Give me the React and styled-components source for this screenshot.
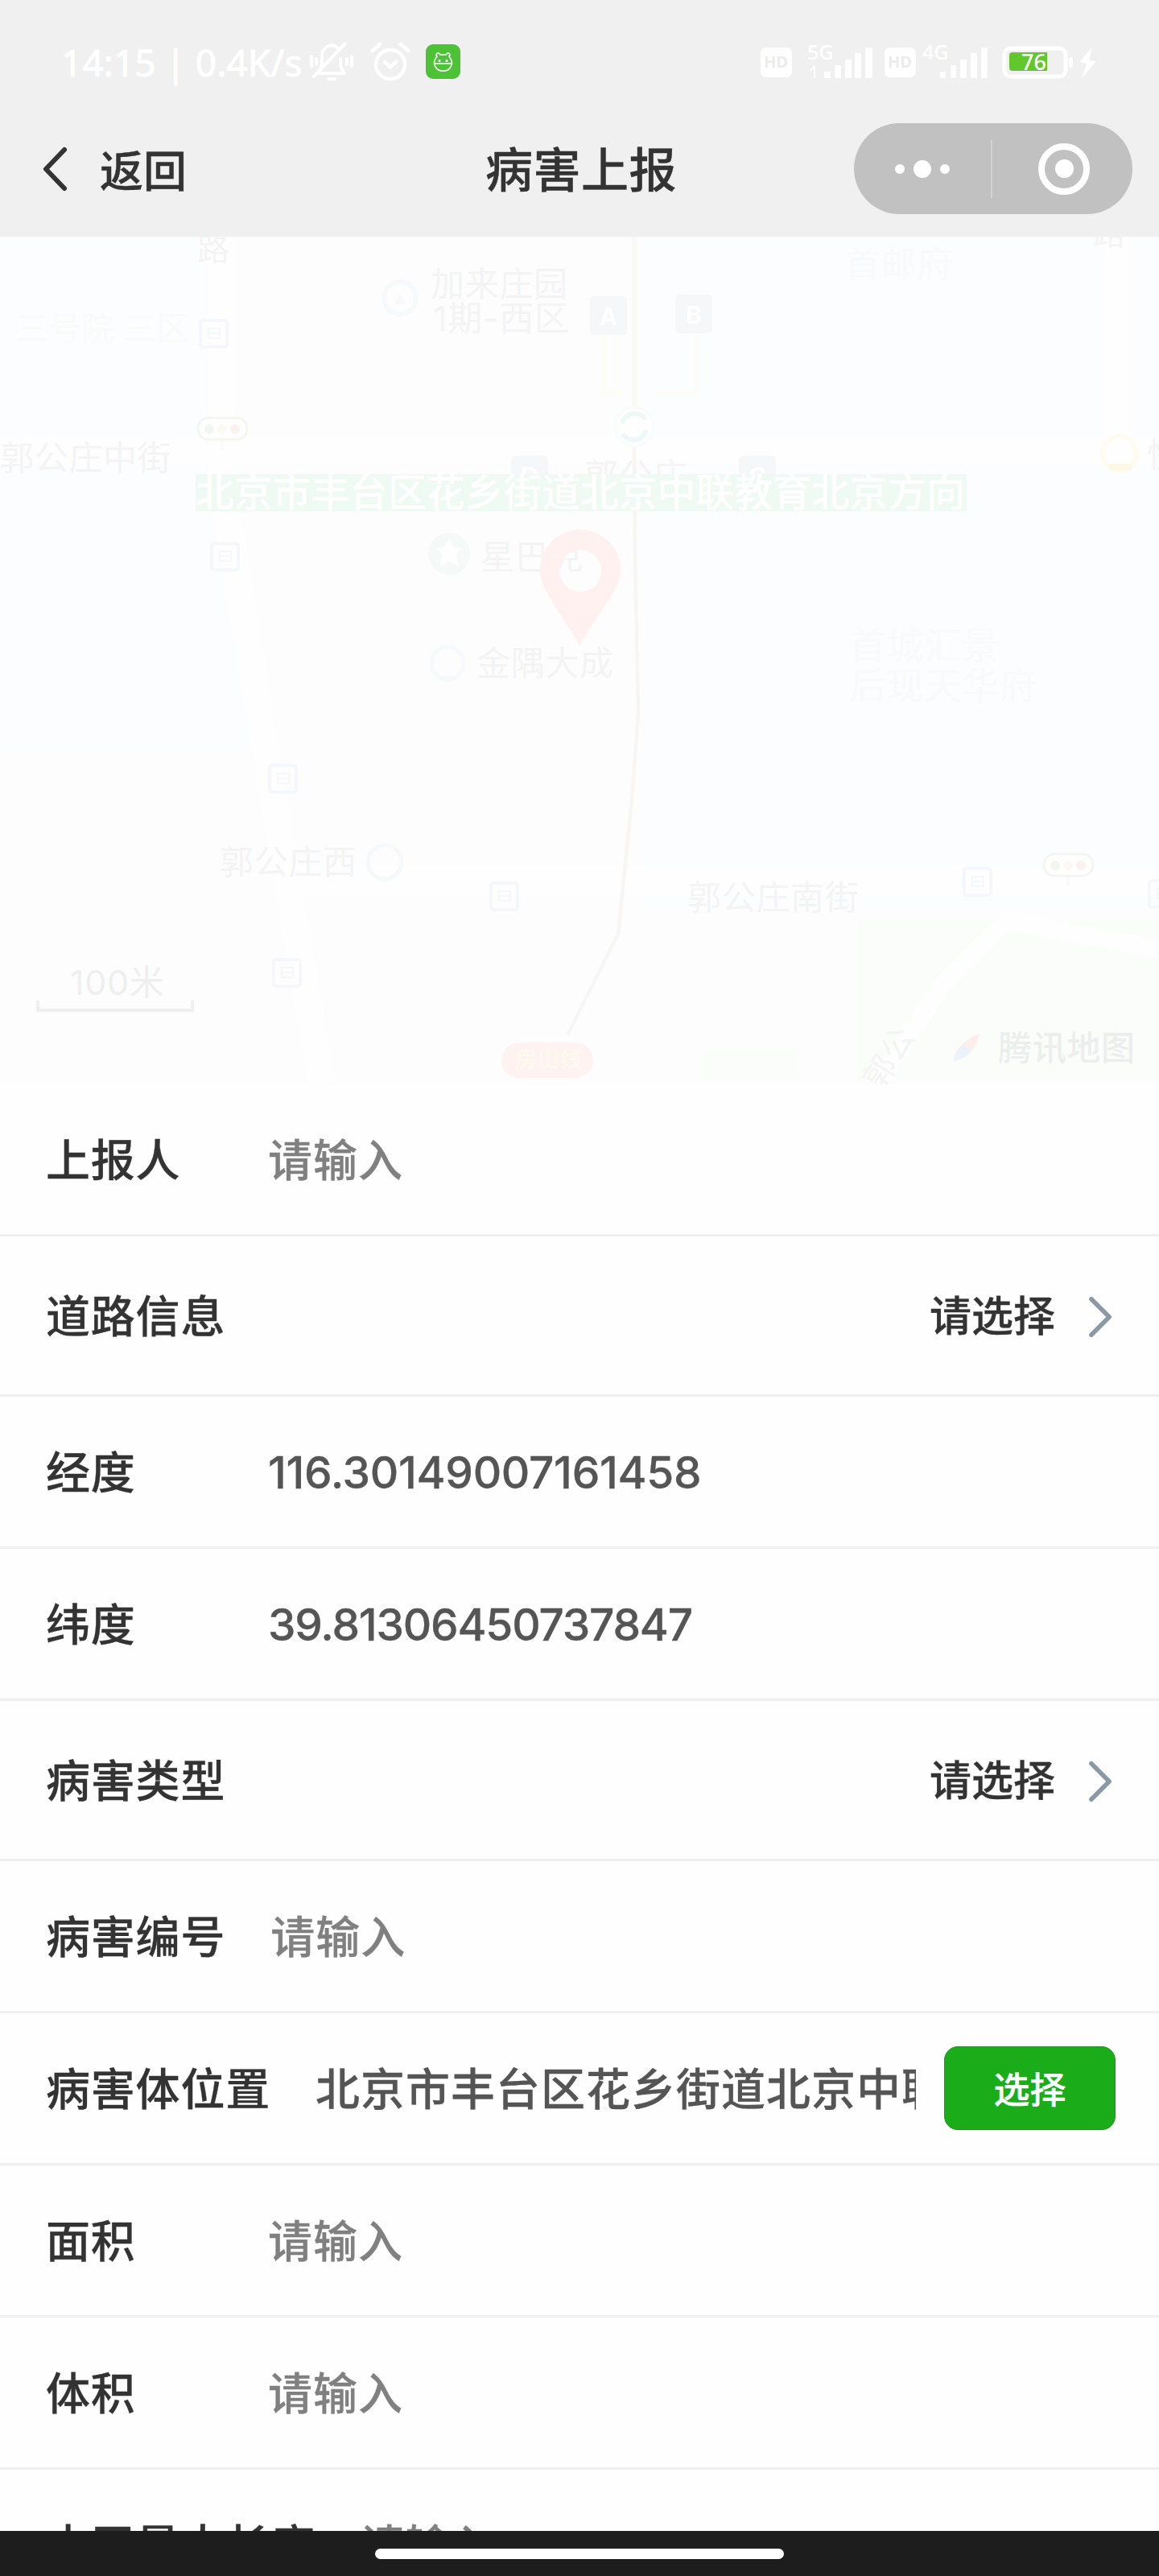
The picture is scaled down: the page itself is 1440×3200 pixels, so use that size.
import React from 'react'
import styled, { createGlobalStyle, css } from 'styled-components'

const GlobalStyle = createGlobalStyle`
  * {
    box-sizing: border-box;
  }
  body {
    margin: 0;
    background-color: #fefefe;
    font-family: Inter, 'Noto Sans CJK SC', sans-serif;
  }
  button {
    font-family: inherit;
  }
`

const Page = styled.div`
  width: 1440px;
  height: 3200px;
  display: flex;
  flex-direction: column;
  overflow: hidden;
  background-color: #fefefe;
`

const Header = styled.header`
  flex: none;
  height: 294px;
  background-color: #f0f0f0;
`
const StatusBar = styled.div`
  height: 153px;
  padding: 0 73px 0 76px;
  display: flex;
  justify-content: space-between;
  align-items: center;
  color: #fefefe;
`
const StatusGroup = styled.div`
  display: flex;
  align-items: center;
`
const StatusIcons = styled.div`
  display: flex;
  align-items: center;
  gap: 19px;
`
const StatusText = styled.span`
  width: 307px;
  font-family: 'Noto Sans', sans-serif;
  font-size: 46px;
  line-height: 60px;
  -webkit-text-stroke: 1px #fefefe;
  white-space: nowrap;
`
const NavBar = styled.div`
  height: 113px;
  padding: 0 33px 0 52px;
  display: grid;
  grid-template-columns: 1fr auto 1fr;
  align-items: center;
`
const BackButton = styled.div`
  display: flex;
  align-items: center;
  gap: 39px;
  font-size: 54px;
  font-weight: 500;
  color: #333333;
  -webkit-text-stroke: 0.4px #333333;
`
const Title = styled.h1`
  margin: 0;
  padding: 4px 15px 0 0;
  font-size: 59px;
  line-height: 80px;
  letter-spacing: 0.5px;
  font-weight: 500;
  color: #333333;
  -webkit-text-stroke: 0.4px #333333;
`
const Capsule = styled.div`
  justify-self: end;
  width: 346px;
  height: 113px;
  border-radius: 57px;
  background-color: #c1c1c1;
  display: flex;
  align-items: center;
`
const CapsuleHalf = styled.div`
  flex: 1;
  display: flex;
  justify-content: center;
  align-items: center;
  gap: 11px;
  & + & {
    padding-left: 4px;
    border-left: 2px solid #d3d3d3;
    height: 72px;
  }
`
const Dot = styled.i`
  width: ${({ $size }) => $size}px;
  height: ${({ $size }) => $size}px;
  border-radius: 50%;
  background-color: #ffffff;
`
const Ring = styled.div`
  width: 64px;
  height: 64px;
  border: 8px solid #ffffff;
  border-radius: 50%;
  display: flex;
  justify-content: center;
  align-items: center;
`

const MapArea = styled.section`
  flex: none;
  position: relative;
  height: 1053px;
  overflow: hidden;
  background-color: #fcfdfe;
  & > svg {
    display: block;
  }
`
const MapLabel = styled.span`
  position: absolute;
  left: ${({ $x }) => $x}px;
  top: ${({ $y }) => $y}px;
  font-size: ${({ $size }) => $size || 42}px;
  font-weight: ${({ $weight }) => $weight || 400};
  line-height: 1;
  letter-spacing: 0.7px;
  white-space: nowrap;
  color: ${({ $color }) => $color || '#f4f4f5'};
  ${({ $rotate }) => $rotate && css`
    transform: rotate(${$rotate}deg);
  `}
`
const ExitBadge = styled.div`
  position: absolute;
  left: ${({ $x }) => $x}px;
  top: ${({ $y }) => $y}px;
  width: 46px;
  height: 48px;
  line-height: 50px;
  border-radius: 5px;
  background-color: #f6f7f9;
  color: #ffffff;
  font-size: 30px;
  font-weight: 700;
  text-align: center;
`
const Banner = styled.div`
  position: absolute;
  left: 243px;
  top: 295px;
  width: 958px;
  height: 46px;
  line-height: 46px;
  font-size: 47.8px;
  font-weight: 500;
  white-space: nowrap;
  color: #ffffff;
  background-color: #effaf4;
`
const Pin = styled.svg`
  position: absolute;
  left: 671px;
  top: 364px;
`

const Form = styled.main`
  flex: 1;
  min-height: 0;
  overflow: hidden;
`
const Row = styled.div`
  height: ${({ $tall }) => ($tall ? 199 : 189)}px;
  padding: 2px 54px 0 57px;
  border-bottom: 3px solid #efefef;
  display: flex;
  align-items: center;
  font-size: 55px;
  line-height: 80px;
`
const Label = styled.label`
  flex: none;
  min-width: 276px;
  padding-right: 56px;
  letter-spacing: 0.8px;
  font-weight: 500;
  color: #333333;
  -webkit-text-stroke: 0.3px #333333;
`
const Value = styled.div`
  flex: 1;
  min-width: 0;
  overflow: hidden;
  white-space: nowrap;
  font-weight: 500;
  letter-spacing: ${({ $spacing }) => $spacing ?? 1}px;
  color: ${({ $placeholder }) => ($placeholder ? '#808080' : '#555555')};
  -webkit-text-stroke: 0.3px currentColor;
`
const Picker = styled.div`
  margin: 2px 2px 0 auto;
  display: flex;
  align-items: center;
  gap: 40px;
  font-size: 52px;
  font-weight: 500;
  color: #333333;
  -webkit-text-stroke: 0.3px #333333;
`
const SelectButton = styled.button`
  flex: none;
  width: 213px;
  height: 104px;
  margin: 0 0 2px 35px;
  padding: 0 0 2px;
  border: 1px solid #2a8f2a;
  border-radius: 17px;
  background-color: #1aad19;
  color: #ffffff;
  font-size: 45px;
  font-weight: 500;
  -webkit-text-stroke: 0.3px #ffffff;
`

const HomeBar = styled.footer`
  flex: none;
  height: 56px;
  padding-top: 22px;
  background-color: #1d1d1d;
`
const HomeIndicator = styled.div`
  width: 508px;
  height: 13px;
  margin: 0 auto;
  border-radius: 7px;
  background-color: #ffffff;
`

const rows = [
  { label: '上报人', placeholder: '请输入' },
  { label: '道路信息', picker: '请选择' },
  { label: '经度', value: '116.30149007161458', spacing: -0.3 },
  { label: '纬度', value: '39.81306450737847', spacing: -1.2 },
  { label: '病害类型', picker: '请选择' },
  { label: '病害编号', placeholder: '请输入' },
  { label: '病害体位置', value: '北京市丰台区花乡街道北京中联教育', button: '选择' },
  { label: '面积', placeholder: '请输入' },
  { label: '体积', placeholder: '请输入' },
  { label: '水平最大长度', placeholder: '请输入' },
]

const mapLabels = [
  { text: '路', x: 245, y: -4, size: 40 },
  { text: '三号院 三区', x: 20, y: 94, size: 40, color: '#f9fbfb' },
  { text: '加来庄园', x: 535, y: 38 },
  { text: '1期-西区', x: 538, y: 80, size: 43 },
  { text: '郭公庄中街', x: 0, y: 254 },
  { text: '首邮府', x: 1050, y: 12, color: '#f8fafb', size: 44 },
  { text: '路', x: 1358, y: -24, size: 40 },
  { text: '郭公庄', x: 726, y: 276 },
  { text: '星巴克', x: 597, y: 377 },
  { text: '金隅大成', x: 592, y: 509 },
  { text: '首城汇景', x: 1055, y: 484, size: 46, color: '#f9fafc' },
  { text: '后现天华府', x: 1055, y: 534, size: 46, color: '#f9fafc' },
  { text: '郭公庄西', x: 273, y: 756 },
  { text: '郭公庄南街', x: 854, y: 800 },
  { text: '快', x: 1425, y: 250 },
  { text: '100米', x: 87, y: 905, size: 43, color: '#efefef' },
  { text: '郭公', x: 1064, y: 1000, size: 40, rotate: -58 },
  { text: '腾讯地图', x: 1240, y: 987, size: 42, weight: 500, color: '#eceeed' },
]

const busStops = [[247, 102], [261, 379], [333, 655], [608, 801], [338, 896], [1196, 783], [1426, 798]]

const exits = [
  { name: 'A', x: 733, y: 74 },
  { name: 'B', x: 839, y: 72 },
  { name: 'D', x: 635, y: 272 },
  { name: 'C', x: 918, y: 272 },
]

const BellOffIcon = () => (
  <svg width="58" height="58" viewBox="0 0 58 58" fill="none" stroke="#fff" strokeWidth="4" strokeLinecap="round">
    <path d="M14 43h31M43 40c-3-4-3-8-3-15M36 11c-7-6-19-1-19 11 0 9 0 14-4 19M25 50h8M46 6 7 47M4 22v12M54 22v12M10 25v7M48 25v7" />
  </svg>
)

const AlarmIcon = () => (
  <svg width="50" height="52" viewBox="0 0 50 52" fill="none" stroke="#fff" strokeWidth="4.5" strokeLinecap="round">
    <circle cx="25" cy="29" r="18" />
    <path d="m18 26 7 6 7-6M3 12l9-8M47 12l-9-8" />
  </svg>
)

const AppBadge = () => (
  <svg width="43" height="43" viewBox="0 0 43 43">
    <rect width="43" height="43" rx="9" fill="#4dc236" />
    <g fill="none" stroke="#fff" strokeWidth="1.6">
      <path d="M14 15c-4 5-4 10-2 13 4 7 15 7 19 0 2-3 2-8-2-13 2-2 0-5-2-4l-2 2h-7l-2-2c-2-1-4 2-2 4zM11 24h21" />
      <path d="M17 19v3M26 19v3" strokeWidth="2.6" />
    </g>
  </svg>
)

const SignalIcons = () => (
  <svg width="422" height="60" viewBox="0 0 422 60" fill="#fff" fontFamily="Noto Sans, sans-serif">
    <rect x="0" y="12" width="39" height="37" rx="7" />
    <text x="4" y="37" fontSize="20" fontWeight="700" fill="#ececec">HD</text>
    <text x="58" y="27" fontSize="25" fontWeight="500">5G</text>
    <path d="M67 36v14M62 40l5-5" stroke="#fff" strokeWidth="2" />
    <path d="M79 42h8v8h-8zM92 34h8v16h-8zM105 27h8v23h-8zM117 19h8v31h-8zM130 12h9v38h-9z" />
    <rect x="154" y="12" width="39" height="37" rx="7" />
    <text x="158" y="37" fontSize="20" fontWeight="700" fill="#ececec">HD</text>
    <text x="201" y="27" fontSize="25" fontWeight="500">4G</text>
    <path d="M223 42h7v8h-7zM236 34h7v16h-7zM248 27h8v23h-8zM261 19h8v31h-8zM274 12h8v38h-8z" />
    <rect x="303" y="13" width="76" height="35" rx="8" fill="none" stroke="#fff" strokeWidth="5" />
    <path d="M313 18h43v23h-43a4 4 0 0 1-4-4V22a4 4 0 0 1 4-4z" fill="#60c82c" />
    <text x="324" y="40" fontSize="27" fontWeight="500">76</text>
    <rect x="383" y="24" width="5" height="13" rx="2" />
    <path d="m412 12-16 18 9 2-6 18 18-21-9-1z" />
  </svg>
)

const Arrow = ({ back }) => (
  <svg width="33" height={back ? 56 : 50} viewBox="0 0 33 54" fill="none" strokeLinecap="round" strokeLinejoin="round">
    {back ? (
      <path d="M28 3 5 27l23 24" stroke="#333333" strokeWidth="6" />
    ) : (
      <path d="m4 3 24 24L4 51" stroke="#8a99a3" strokeWidth="6" />
    )}
  </svg>
)

const TrafficLight = ({ x, y }) => (
  <g transform={`translate(${x} ${y})`}>
    <rect x="1" y="1" width="61" height="27" rx="13" fill="#fefefe" stroke="#f5f5f3" strokeWidth="3" />
    <circle cx="15" cy="15" r="6" fill="#f1f6f1" />
    <circle cx="31" cy="15" r="6" fill="#fbf9f2" />
    <circle cx="47" cy="15" r="6" fill="#fbf2f0" />
    <path d="M31 29v12" stroke="#f9f9f7" strokeWidth="3" />
  </g>
)

const MapDrawing = () => (
  <svg width="1440" height="1053" viewBox="0 0 1440 1053" fill="none">
    <path d="M275 0V300L330 640 400 1053H800V0z" fill="#fdfdfd" />
    <path d="M0 640h330l70 413H0zM800 830h640v223H800z" fill="#fdfdfd" />
    <path d="M1065 850H1440V1049H1065zM873 1009h119v40H873z" fill="#fbfdfb" />
    <path d="M0 265H1440M340 800H1440M275 0V300L330 640 400 1053M1388 0V265" stroke="#fefefe" strokeWidth="34" />
    <path d="M1440 885 1250 850 1170 930 1090 1053" stroke="#fefefe" strokeWidth="22" />
    <path d="M750 123v72h22M865 123v72h-48" stroke="#fcfdf6" strokeWidth="6" />
    <path d="M788 0v215" stroke="#fafaf4" strokeWidth="5" />
    <path d="M788 255 789 400 793 590 785 700 768 866 705 992" stroke="#f7f6f5" strokeWidth="4.5" />
    <circle cx="788" cy="236" r="24" fill="#fefefe" stroke="#f8fcfb" strokeWidth="3" />
    <path d="M773 232a16 16 0 0 1 29-5" stroke="#edf9f4" strokeWidth="6" />
    <path d="M803 240a16 16 0 0 1-29 5" stroke="#eef7fa" strokeWidth="6" />
    {busStops.map(([x, y]) => (
      <g key={`${x}-${y}`} stroke="#f5f7fd" strokeWidth="4">
        <rect x={x + 2} y={y + 2} width="33" height="33" rx="3" />
        <path d={`M${x + 12} ${y + 12}h14v12h-14zM${x + 12} ${y + 18}h14`} strokeWidth="2" />
      </g>
    ))}
    <TrafficLight x={245} y={224} />
    <TrafficLight x={1296} y={766} />
    <circle cx="497" cy="76" r="20" stroke="#f8f9fb" strokeWidth="6" />
    <path d="m489 84 8-12 8 12z" fill="#f8f9fb" />
    <circle cx="558" cy="394" r="26" fill="#f5f9f7" />
    <path d="m558 376 6 10 10 1-7 8 3 15-12-7-12 7 3-15-7-8 10-1z" fill="#fefefe" />
    <circle cx="556" cy="530" r="20" stroke="#f8f9fc" strokeWidth="5" />
    <path d="M545 548h22" stroke="#f6f8fb" strokeWidth="5" />
    <circle cx="478" cy="777" r="21" stroke="#f6f9fb" strokeWidth="5" />
    <circle cx="1391" cy="269" r="21" stroke="#fefbef" strokeWidth="6" />
    <path d="M1378 286h28" stroke="#fef7e6" strokeWidth="8" />
    <path d="M47 949v12h192v-12" stroke="#efefef" strokeWidth="4" />
    <rect x="623" y="1001" width="114" height="44" rx="22" fill="#fff3f1" />
    <path d="M1185 1022c2-14 16-26 32-32-1 7-5 16-10 22z" fill="#fdeeec" />
    <path d="M1185 1024c1-8 7-16 13-21l8 9c-5 7-12 10-21 12z" fill="#eaf2fc" />
  </svg>
)

const MapView = () => (
  <MapArea>
    <MapDrawing />
    {mapLabels.map(({ text, x, y, size, weight, color, rotate }) => (
      <MapLabel
        key={`${text}-${x}`}
        $x={x}
        $y={y}
        $size={size}
        $weight={weight}
        $color={color}
        $rotate={rotate}
      >
        {text}
      </MapLabel>
    ))}
    <MapLabel $x={640} $y={1009} $size={27} $color="#fefaf0">房山线</MapLabel>
    {exits.map(({ name, x, y }) => (
      <ExitBadge key={name} $x={x} $y={y}>{name}</ExitBadge>
    ))}
    <Banner>北京市丰台区花乡街道北京中联教育北京方向</Banner>
    <Pin width="100" height="144" viewBox="0 0 100 144">
      <path d="M50 0a50 50 0 0 0-50 50c0 24 20 44 49 94 29-50 51-70 51-94A50 50 0 0 0 50 0zm0 25a26 26 0 1 1 0 52 26 26 0 0 1 0-52z" fill="#fff1ef" fillRule="evenodd" />
    </Pin>
  </MapArea>
)

const FormRow = ({ label, value, placeholder, spacing, picker, button }) => (
  <Row $tall={Boolean(picker)}>
    <Label>{label}</Label>
    {picker ? (
      <Picker>
        {picker}
        <Arrow />
      </Picker>
    ) : (
      <Value $placeholder={!value} $spacing={spacing}>{value || placeholder}</Value>
    )}
    {button && <SelectButton>{button}</SelectButton>}
  </Row>
)

const App = () => {
  return (
    <Page>
      <GlobalStyle />
      <Header>
        <StatusBar>
          <StatusGroup>
            <StatusText>14:15 | 0.4K/s</StatusText>
            <StatusIcons>
              <BellOffIcon />
              <AlarmIcon />
              <AppBadge />
            </StatusIcons>
          </StatusGroup>
          <SignalIcons />
        </StatusBar>
        <NavBar>
          <BackButton>
            <Arrow back />
            返回
          </BackButton>
          <Title>病害上报</Title>
          <Capsule>
            <CapsuleHalf>
              <Dot $size={12} />
              <Dot $size={22} />
              <Dot $size={12} />
            </CapsuleHalf>
            <CapsuleHalf>
              <Ring>
                <Dot $size={23} />
              </Ring>
            </CapsuleHalf>
          </Capsule>
        </NavBar>
      </Header>
      <MapView />
      <Form>
        {rows.map((row) => (
          <FormRow key={row.label} {...row} />
        ))}
      </Form>
      <HomeBar>
        <HomeIndicator />
      </HomeBar>
    </Page>
  )
}

export default App
